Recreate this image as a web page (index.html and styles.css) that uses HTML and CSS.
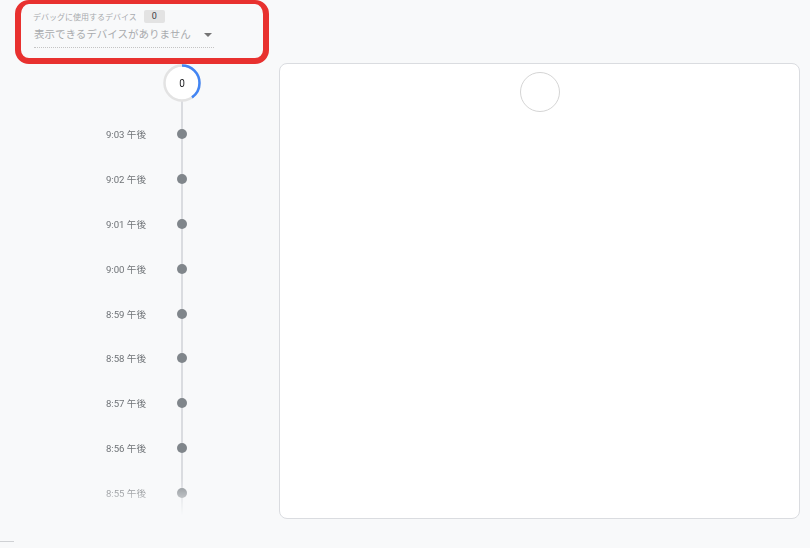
FILE: index.html
```html
<!DOCTYPE html>
<html lang="ja">
<head>
    <meta charset="UTF-8">
    <title>DebugView</title>
    <link rel="stylesheet" href="styles.css">
</head>
<body>

<div class="main">
    <!-- 左側：デバイス選択とタイムライン -->
    <div class="sidebar">
        <div class="device-box">
            <div class="device-label">
                <span>デバッグに使用するデバイス</span>
                <span class="badge">0</span>
            </div>
            <div class="device-select">
                <span>表示できるデバイスがありません</span>
                <span class="arrow"></span>
            </div>
        </div>

        <div class="timeline">
            <div class="counter">
                <svg width="38" height="38" viewBox="0 0 38 38">
                    <circle cx="19" cy="19" r="17.5" fill="#fff" stroke="#e3e3e3" stroke-width="2.5"/>
                    <circle cx="19" cy="19" r="17.5" fill="none" stroke="#4285f4" stroke-width="2.5"
                            stroke-dasharray="44 120" transform="rotate(-90 19 19)"/>
                </svg>
                <span class="counter-num">0</span>
            </div>
            <ul class="minutes">
                <li><span class="time">9:03 午後</span><span class="rail"><i class="dot"></i></span></li>
                <li><span class="time">9:02 午後</span><span class="rail"><i class="dot"></i></span></li>
                <li><span class="time">9:01 午後</span><span class="rail"><i class="dot"></i></span></li>
                <li><span class="time">9:00 午後</span><span class="rail"><i class="dot"></i></span></li>
                <li><span class="time">8:59 午後</span><span class="rail"><i class="dot"></i></span></li>
                <li><span class="time">8:58 午後</span><span class="rail"><i class="dot"></i></span></li>
                <li><span class="time">8:57 午後</span><span class="rail"><i class="dot"></i></span></li>
                <li><span class="time">8:56 午後</span><span class="rail"><i class="dot"></i></span></li>
                <li><span class="time">8:55 午後</span><span class="rail"><i class="dot"></i></span></li>
            </ul>
        </div>
    </div>

    <!-- 右側：イベントパネル -->
    <div class="panel">
        <div class="panel-circle"></div>
    </div>
</div>

<div class="footer-line"></div>

</body>
</html>
```

FILE: styles.css
```css
/* 全体 */
body {
    margin: 0;
    background-color: #f8f9fa;
    font-family: Roboto, "Noto Sans CJK JP", sans-serif;
    color: #5f6368;
}

.main {
    display: flex;
    align-items: flex-start;
    height: 541px;
}

.sidebar {
    width: 279px;
    flex-shrink: 0;
}

/* デバイス選択（赤枠） */
.device-box {
    margin-left: 15px;
    width: 254px;
    height: 64px;
    box-sizing: border-box;
    border: 6px solid #e8312f;
    border-top-width: 4px;
    border-radius: 14px;
    padding: 6px 0 0 12px;
}

.device-label {
    display: flex;
    align-items: center;
    font-size: 8px;
    color: #a8abaf;
    height: 13px;
}

.badge {
    margin-left: 7px;
    width: 21px;
    height: 13px;
    line-height: 13px;
    text-align: center;
    font-size: 9px;
    color: #3c4043;
    background-color: #e3e3e3;
    border-radius: 2px;
}

.device-select {
    margin: 5px 0 0 1px;
    width: 180px;
    display: flex;
    justify-content: space-between;
    align-items: center;
    padding: 0 2px 5px 0;
    box-sizing: border-box;
    border-bottom: 1px dotted #c4c4c4;
    font-size: 10.5px;
    line-height: 14px;
    color: #a9abae;
}

.arrow {
    width: 0;
    height: 0;
    border-left: 4px solid transparent;
    border-right: 4px solid transparent;
    border-top: 4px solid #757575;
}

/* タイムライン */
.timeline {
    background: linear-gradient(#dadce0, #dadce0) no-repeat 181px 0 / 2px 100%;
    -webkit-mask-image: linear-gradient(to bottom, #000 92%, transparent 100%);
    mask-image: linear-gradient(to bottom, #000 92%, transparent 100%);
}

.counter {
    margin-left: 163px;
    width: 38px;
    height: 38px;
    display: grid;
    place-items: center;
}

.counter svg,
.counter-num {
    grid-area: 1 / 1;
}

.counter svg {
    display: block;
}

.counter-num {
    font-size: 10px;
    color: #202124;
}

.minutes {
    list-style: none;
    margin: 0;
    padding: 9.8px 0 0;
}

.minutes li {
    display: flex;
    align-items: center;
    height: 44.85px;
}

.time {
    width: 146px;
    text-align: right;
    font-size: 9.6px;
    color: #6f7377;
}

.rail {
    width: 72px;
    display: flex;
    justify-content: center;
}

.dot {
    width: 10px;
    height: 10px;
    border-radius: 50%;
    background-color: #80868b;
}

/* パネル */
.panel {
    margin-top: 63px;
    width: 521px;
    height: 456px;
    box-sizing: border-box;
    background-color: #fff;
    border: 1px solid #dadce0;
    border-radius: 8px;
}

.panel-circle {
    width: 40px;
    height: 40px;
    box-sizing: border-box;
    margin: 8px auto 0;
    border: 1px solid #d5d5d5;
    border-radius: 50%;
}

.footer-line {
    width: 14px;
    border-top: 1px solid #cfd1d4;
}
```
